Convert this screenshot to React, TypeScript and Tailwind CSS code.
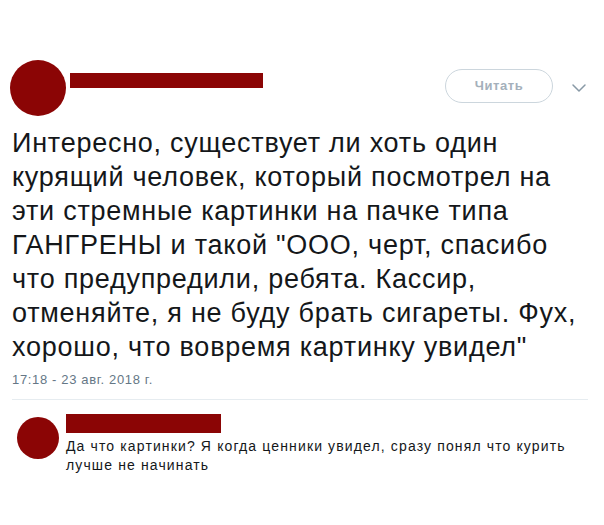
import React from "react";
import { ChevronDown } from "lucide-react";

const lines = [
  "Интересно, существует ли хоть один",
  "курящий человек, который посмотрел на",
  "эти стремные картинки на пачке типа",
  "ГАНГРЕНЫ и такой \"ООО, черт, спасибо",
  "что предупредили, ребята. Кассир,",
  "отменяйте, я не буду брать сигареты. Фух,",
  "хорошо, что вовремя картинку увидел\"",
];

export default function App() {
  return (
    <div
      className="w-[604px] h-[525px] bg-white overflow-hidden"
      style={{ fontFamily: '"Liberation Sans", Arial, sans-serif' }}
    >
      {/* header */}
      <div className="flex items-start pt-[60px] pl-[10px] pr-[13px]">
        <div className="w-[56px] h-[56px] rounded-full bg-[#8b0505] shrink-0" />
        <div className="ml-[4px] mt-[13px] w-[193px] h-[15px] bg-[#8b0505]" />
        <div className="flex-1" />
        <button className="mt-[9px] w-[108px] h-[34px] rounded-full border border-[#ccd6dd] text-[13px] tracking-[0.6px] font-bold text-[#a4b0bb]">
          Читать
        </button>
        <ChevronDown className="ml-[14px] mt-[16px] w-[24px] h-[24px] text-[#8899a6]" strokeWidth={1.5} />
      </div>

      {/* tweet body */}
      <div className="pl-[12px] mt-[10px] text-[27px] leading-[34px] tracking-[0.75px] text-[#14171a]">
        {lines.map((l, i) => (
          <div key={i} className="whitespace-nowrap">
            {l}
          </div>
        ))}
      </div>

      <div className="pl-[12px] mt-[8px] text-[13px] leading-[16px] tracking-[0.65px] text-[#657786]">
        17:18 - 23 авг. 2018 г.
      </div>

      <div className="ml-[12px] mr-[16px] mt-[11px] h-px bg-[#e6ecf0]" />

      {/* reply */}
      <div className="flex items-start pl-[17px] mt-[14px]">
        <div className="w-[42px] h-[42px] rounded-full bg-[#8b0505] shrink-0 mt-[3px]" />
        <div className="ml-[7px]">
          <div className="w-[155px] h-[19px] bg-[#8b0505]" />
          <div className="mt-[4px] text-[14px] leading-[19px] tracking-[1.13px] text-[#14171a] whitespace-nowrap">
            <div>Да что картинки? Я когда ценники увидел, сразу понял что курить</div>
            <div>лучше не начинать</div>
          </div>
        </div>
      </div>
    </div>
  );
}
